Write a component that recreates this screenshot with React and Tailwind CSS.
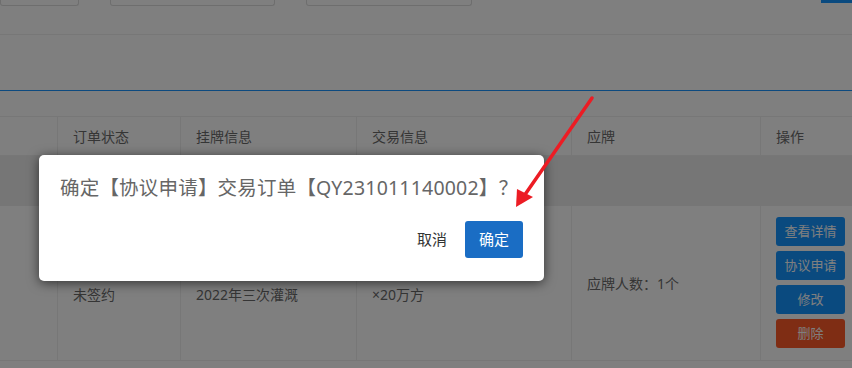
import React from 'react';

const font = { fontFamily: '"Noto Sans", "Noto Sans CJK SC", sans-serif' };

const columns = [
  { key: 'check', label: '', w: 'w-[57px]' },
  { key: 'status', label: '订单状态', w: 'w-[123px]' },
  { key: 'listing', label: '挂牌信息', w: 'w-[176px]' },
  { key: 'trade', label: '交易信息', w: 'w-[215px]' },
  { key: 'bid', label: '应牌', w: 'w-[189px]' },
  { key: 'ops', label: '操作', w: 'flex-1' },
];

const OpButton = ({ children, red }) => (
  <button
    className={
      'w-[69px] h-[29px] rounded-[3px] text-[13px] text-white ' +
      (red ? 'bg-[#ff5a28]' : 'bg-[#1494ff]')
    }
  >
    {children}
  </button>
);

const Page = () => (
  <div className="w-full h-full bg-white text-[#6b6b6b]">
    {/* filter row, scrolled past */}
    <div className="h-[35px] border-b border-[#eeeeee] flex items-start relative">
      <div className="w-[79px] h-[6px] border border-t-0 border-[#dddddd] rounded-b-[3px]" />
      <div className="ml-[31px] w-[165px] h-[6px] border border-t-0 border-[#dddddd] rounded-b-[3px]" />
      <div className="ml-[31px] w-[166px] h-[6px] border border-t-0 border-[#dddddd] rounded-b-[3px]" />
      <div className="ml-auto w-[31px] h-[3px] bg-[#1494ff]" />
    </div>
    <div className="h-[55px]" />
    <div className="h-px bg-[#1a94ff]" />
    <div className="h-[26px] border-b border-[#eeeeee]" />

    {/* table header */}
    <div className="flex h-[39px] border-b border-[#eeeeee] text-[14px]">
      {columns.map((c, i) => (
        <div
          key={c.key}
          className={c.w + ' flex items-center pl-[15px] ' + (i > 0 ? 'border-l border-[#eeeeee]' : '')}
        >
          {c.label}
        </div>
      ))}
    </div>

    {/* group row */}
    <div className="h-[50px] bg-[#ececec]" />

    {/* data row */}
    <div className="flex h-[155px] border-b border-[#eeeeee] text-[14px]">
      <div className="w-[57px]" />
      <div className="w-[123px] border-l border-[#eeeeee] flex items-center pl-[15px] pt-[22px]">
        未签约
      </div>
      <div className="w-[176px] border-l border-[#eeeeee] flex items-center pl-[15px] pt-[22px]">
        2022年三次灌溉
      </div>
      <div className="w-[215px] border-l border-[#eeeeee] flex items-center pl-[15px] pt-[22px]">
        ×20万方
      </div>
      <div className="w-[189px] border-l border-[#eeeeee] flex items-center pl-[15px]">
        应牌人数：1个
      </div>
      <div className="flex-1 border-l border-[#eeeeee] flex flex-col gap-[5px] pl-[15px] pt-[11px]">
        <OpButton>查看详情</OpButton>
        <OpButton>协议申请</OpButton>
        <OpButton>修改</OpButton>
        <OpButton red>删除</OpButton>
      </div>
    </div>
  </div>
);

const ConfirmDialog = () => (
  <div className="absolute left-[39px] top-[155px] w-[505px] h-[126px] bg-white rounded-[5px] shadow-[0_2px_12px_rgba(0,0,0,0.6)] px-[21px] pt-[19px]">
    <p className="text-[19.5px] text-[#666666] leading-[28px] tracking-[0.2px] whitespace-nowrap">
      确定【协议申请】交易订单【QY231011140002】？
    </p>
    <div className="flex justify-end items-center mt-[19px]">
      <button className="text-[15px] text-[#333333] mr-[18px]">取消</button>
      <button className="w-[58px] h-[37px] rounded-[3px] bg-[#1a6dc4] text-white text-[15px]">
        确定
      </button>
    </div>
  </div>
);

const Arrow = () => (
  <svg className="absolute left-0 top-0 pointer-events-none" width="852" height="368">
    <line x1="592" y1="98" x2="524" y2="196" stroke="#ec1c24" strokeWidth="3.5" strokeLinecap="round" />
    <polygon points="517,189 516,207 533,197" fill="#ec1c24" />
  </svg>
);

export default function App() {
  return (
    <div className="relative w-[852px] h-[368px] overflow-hidden" style={font}>
      <Page />
      <div className="absolute inset-0 bg-black/50" />
      <ConfirmDialog />
      <Arrow />
    </div>
  );
}
